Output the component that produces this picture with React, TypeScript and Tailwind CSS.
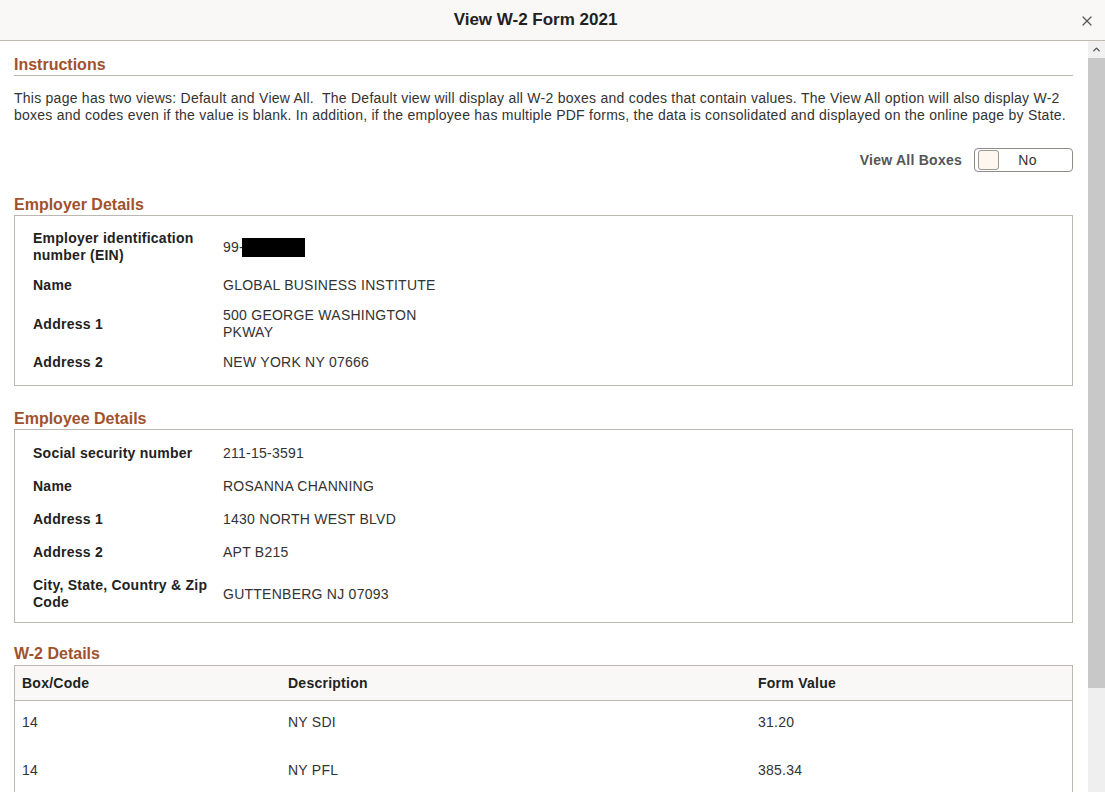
import { X, ChevronUp } from 'lucide-react'

type Row = { label: string; value: React.ReactNode }

const employer: Row[] = [
  {
    label: 'Employer identification number (EIN)',
    value: (
      <span className="inline-flex items-center">
        99-<span className="-ml-[2px] inline-block h-[19px] w-[63px] bg-black" />
      </span>
    ),
  },
  { label: 'Name', value: 'GLOBAL BUSINESS INSTITUTE' },
  { label: 'Address 1', value: '500 GEORGE WASHINGTON PKWAY' },
  { label: 'Address 2', value: 'NEW YORK NY 07666' },
]

const employee: Row[] = [
  { label: 'Social security number', value: '211-15-3591' },
  { label: 'Name', value: 'ROSANNA CHANNING' },
  { label: 'Address 1', value: '1430 NORTH WEST BLVD' },
  { label: 'Address 2', value: 'APT B215' },
  { label: 'City, State, Country & Zip Code', value: 'GUTTENBERG NJ 07093' },
]

const w2 = [
  { box: '14', desc: 'NY SDI', value: '31.20' },
  { box: '14', desc: 'NY PFL', value: '385.34' },
]

function SectionTitle({ children, className = '' }: { children: React.ReactNode; className?: string }) {
  return <h2 className={`text-[16px] font-bold leading-[20px] text-[#a0522d] ${className}`}>{children}</h2>
}

function DetailBox({ rows, gap, pad }: { rows: Row[]; gap: string; pad: string }) {
  return (
    <div className={`border border-[#bcb7b0] pl-[18px] ${pad}`}>
      <div className={`flex flex-col ${gap}`}>
        {rows.map((r) => (
          <div key={r.label} className="flex items-center">
            <div className="mr-[12px] w-[178px] text-[14px] font-bold leading-[17px] text-[#222]">{r.label}</div>
            <div className="w-[220px] text-[14px] leading-[17px] text-[#333]">{r.value}</div>
          </div>
        ))}
      </div>
    </div>
  )
}

export default function App() {
  return (
    <div className="flex h-screen flex-col overflow-hidden bg-white font-['Liberation_Sans',Arial,sans-serif] tracking-[0.25px]">
      {/* Header */}
      <header className="flex h-[41px] shrink-0 items-center border-b border-[#bdb8b1] bg-[#f9f8f7]">
        <h1 className="flex-1 pl-[2px] text-center text-[17px] font-bold tracking-normal text-[#222]">View W-2 Form 2021</h1>
        <button className="flex w-[36px] items-center justify-center pt-[1px] text-[#555]">
          <X size={16} strokeWidth={1.8} />
        </button>
      </header>

      <div className="flex min-h-0 flex-1">
        <main className="min-w-0 flex-1 pl-[14px] pr-[15px] pt-[14px]">
          {/* Instructions */}
          <SectionTitle className="border-b border-[#bcb7b0] pb-[1px] !leading-[19px] tracking-normal">Instructions</SectionTitle>
          <p className="mt-[14px] text-[14px] leading-[17px] text-[#333]">
            This page has two views: Default and View All.&nbsp; The Default view will display all W-2 boxes and codes
            that contain values. The View All option will also display W-2 boxes and codes even if the value is blank.
            In addition, if the employee has multiple PDF forms, the data is consolidated and displayed on the online
            page by State.
          </p>

          <div className="mt-[24px] flex items-center justify-end gap-[12px]">
            <span className="text-[14px] font-bold text-[#555]">View All Boxes</span>
            <div className="flex h-[24px] w-[99px] items-center rounded-[4px] border border-[#8f8b86] bg-white">
              <span className="ml-[3px] h-[20px] w-[21px] rounded-[3px] border border-[#9a958f] bg-[#fdf7f0]" />
              <span className="flex-1 pr-[16px] text-center text-[14px] text-[#333]">No</span>
            </div>
          </div>

          {/* Employer */}
          <SectionTitle className="mt-[23px] tracking-normal">Employer Details</SectionTitle>
          <DetailBox rows={employer} gap="gap-[13px]" pad="pt-[14px] pb-[14px]" />

          {/* Employee */}
          <SectionTitle className="mt-[23px] tracking-normal">Employee Details</SectionTitle>
          <DetailBox rows={employee} gap="gap-[16px]" pad="pt-[15px] pb-[11px]" />

          {/* W-2 */}
          <SectionTitle className="mt-[21px] tracking-normal">W-2 Details</SectionTitle>
          <div className="mt-[1px] border border-[#bcb7b0]">
            <div className="grid h-[35px] grid-cols-[266px_470px_1fr] items-center border-b border-[#bcb7b0] bg-[#f9f8f7] px-[7px] text-[14px] font-bold text-[#222]">
              <span>Box/Code</span>
              <span>Description</span>
              <span>Form Value</span>
            </div>
            {w2.map((r, i) => (
              <div
                key={i}
                className="grid h-[48px] grid-cols-[266px_470px_1fr] px-[7px] pt-[13px] text-[14px] leading-[17px] text-[#333]"
              >
                <span>{r.box}</span>
                <span>{r.desc}</span>
                <span>{r.value}</span>
              </div>
            ))}
          </div>
        </main>

        {/* Scrollbar */}
        <div className="flex w-[17px] shrink-0 flex-col bg-[#efefef]">
          <div className="flex h-[17px] items-center justify-center bg-[#f1f1f1] text-[#505050]">
            <ChevronUp size={11} strokeWidth={3} />
          </div>
          <div className="h-[630px] bg-[#c8c8c8]" />
        </div>
      </div>
    </div>
  )
}
